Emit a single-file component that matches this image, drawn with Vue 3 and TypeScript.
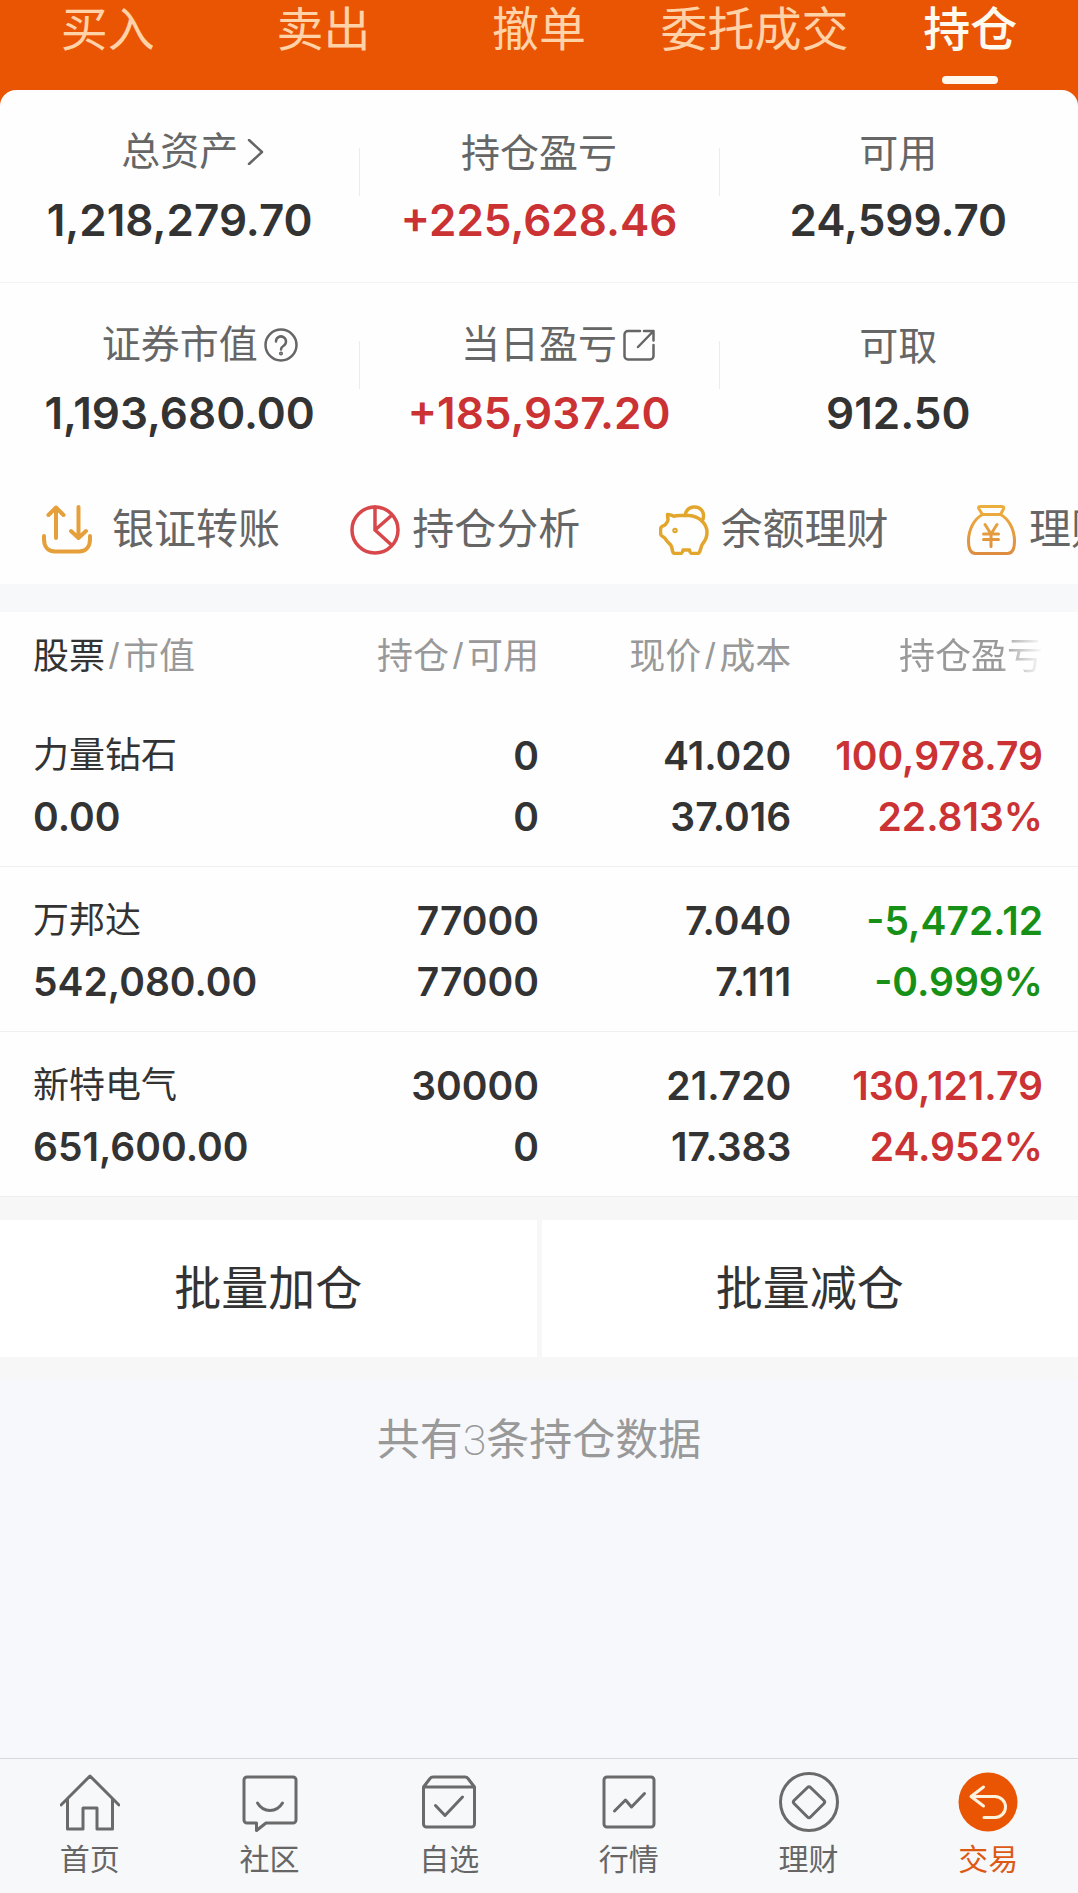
<script setup lang="ts">
import { ref } from 'vue'

interface Holding {
  name: string
  marketValue: string
  held: string
  available: string
  price: string
  cost: string
  profit: string
  rate: string
  trend: 'up' | 'down'
}

const topTabs: string[] = ['买入', '卖出', '撤单', '委托成交', '持仓']
const activeTop = ref('持仓')

const holdings: Holding[] = [
  { name: '力量钻石', marketValue: '0.00', held: '0', available: '0', price: '41.020', cost: '37.016', profit: '100,978.79', rate: '22.813%', trend: 'up' },
  { name: '万邦达', marketValue: '542,080.00', held: '77000', available: '77000', price: '7.040', cost: '7.111', profit: '-5,472.12', rate: '-0.999%', trend: 'down' },
  { name: '新特电气', marketValue: '651,600.00', held: '30000', available: '0', price: '21.720', cost: '17.383', profit: '130,121.79', rate: '24.952%', trend: 'up' },
]
</script>

<template>
  <div class="app">
    <nav class="top-tabs">
      <button
        v-for="tab in topTabs"
        :key="tab"
        type="button"
        class="top-tab"
        :class="{ active: tab === activeTop }"
        @click="activeTop = tab"
      >
        {{ tab }}
      </button>
    </nav>

    <main class="content">
      <div class="card-wrap">
        <section class="card">
          <dl class="summary">
            <div class="cell">
              <dt class="label raised">
                <span class="label-text">总资产</span>
                <svg class="label-icon" width="20" height="26" viewBox="0 0 20 26"><path d="M5 1l13 12L5 25" /></svg>
              </dt>
              <dd class="value">1,218,279.70</dd>
            </div>
            <div class="cell">
              <dt class="label"><span class="label-text">持仓盈亏</span></dt>
              <dd class="value up">+225,628.46</dd>
            </div>
            <div class="cell">
              <dt class="label"><span class="label-text">可用</span></dt>
              <dd class="value">24,599.70</dd>
            </div>
          </dl>
          <dl class="summary">
            <div class="cell">
              <dt class="label raised">
                <span class="label-text">证券市值</span>
                <svg class="label-icon" width="34" height="34" viewBox="0 0 34 34">
                  <circle cx="17" cy="17" r="15.5" />
                  <path d="M12 13.5a5 5 0 1 1 7.6 4.2c-1.8 1.1-2.6 1.9-2.6 3.8" />
                  <circle cx="17" cy="25.5" r="0.8" />
                </svg>
              </dt>
              <dd class="value">1,193,680.00</dd>
            </div>
            <div class="cell">
              <dt class="label raised">
                <span class="label-text">当日盈亏</span>
                <svg class="label-icon" width="32" height="32" viewBox="0 0 32 32">
                  <path d="M17 2H5a3.5 3.5 0 0 0-3.500 3.500V27A3.500 3.500 0 0 0 5 30.500h22a3.500 3.500 0 0 0 3.500-3.500V16M21 2h9.500v9.500M30.500 2L15 18" />
                </svg>
              </dt>
              <dd class="value up">+185,937.20</dd>
            </div>
            <div class="cell">
              <dt class="label"><span class="label-text">可取</span></dt>
              <dd class="value">912.50</dd>
            </div>
          </dl>

          <nav class="shortcuts">
            <a href="#" class="shortcut wide-gap">
              <svg width="50" height="50" viewBox="0 0 50 50" stroke="#e5a03c" stroke-width="4">
                <path d="M14 33V2.500M6.500 10L14 2.500 21.500 10M36.500 2v31M29 26l7.500 7 7.500-7M2 31v3c0 8 4 12.500 11 12.500h24c7 0 11-4.500 11-12.500v-3" />
              </svg>
              <span>银证转账</span>
            </a>
            <a href="#" class="shortcut">
              <svg width="50" height="50" viewBox="0 0 50 50" stroke="#d8474a" stroke-width="3.500">
                <circle cx="25" cy="25" r="23" />
                <path d="M25 2V25L41.500 10.500M25 25l16.500 15" />
              </svg>
              <span>持仓分析</span>
            </a>
            <a href="#" class="shortcut">
              <svg width="50" height="50" viewBox="0 0 50 50" stroke="#e3a62c" stroke-width="3.500">
                <path d="M26 10.500C27 5 30.500 2 35.500 2c6 0 9.500 4.500 9 9.500 0 1.500-.5 3-1.500 4.500" />
                <path d="M8.500 9.500c2 .2 4.500.5 6.500 1.800C17 10 21 10.500 25 10.500h5c10 .5 18 8 18 17 0 5-1.500 8-4.500 11.500-1.500 2-1.500 5-3 8-.5 1-1 1.500-2 1.500H33c-1.500 0-2-.5-2.500-3.500H24c-.5 3-1 3.500-2.500 3.500H16c-1.500 0-2-.5-2.500-2.500-.3-2-.5-4-1.500-5.500-1.500-2-4-3.500-5.500-6.500C5.500 32 2.500 31.500 2 30c-.5-2-.5-6 0-7.500.5-1.500 3.500-1.500 4.500-3 .8-1.500 2.500-3 2.500-4.500z" />
                <circle cx="16" cy="25.500" r="1" />
              </svg>
              <span>余额理财</span>
            </a>
            <a href="#" class="shortcut">
              <svg width="50" height="50" viewBox="0 0 50 50" stroke="url(#bag)" stroke-width="3">
                <defs>
                  <linearGradient id="bag" gradientUnits="userSpaceOnUse" x1="0" y1="0" x2="0" y2="50">
                    <stop offset="0" stop-color="#ecb03c" />
                    <stop offset="1" stop-color="#de8c40" />
                  </linearGradient>
                </defs>
                <path d="M13 1.500h22c2 0 2 1 1.500 2.500l-3 5.500h-18L12 4c-.8-1.500-.6-2.500 1-2.500z" />
                <path d="M15.500 9.500C7 14 1.500 25 1.500 36c0 7 1 12.500 7 12.500h32c6 0 7-5.500 7-12.500 0-11-5.500-22-14-26.500" />
                <path d="M18 19.500l6 9.500 6-9.500M24 29v12.500M16.500 29h15M16.500 34.500h15" />
              </svg>
              <span>理财</span>
            </a>
          </nav>
        </section>
      </div>

      <section class="positions">
        <table class="holdings">
          <colgroup>
            <col class="col-name" />
            <col class="col-held" />
            <col class="col-price" />
            <col class="col-profit" />
          </colgroup>
          <thead>
            <tr>
              <th scope="col"><span class="strong">股票</span><span class="slash">/</span>市值</th>
              <th scope="col">持仓<span class="slash">/</span>可用</th>
              <th scope="col">现价<span class="slash">/</span>成本</th>
              <th scope="col"><span class="fade">持仓盈亏</span></th>
            </tr>
          </thead>
          <tbody>
            <tr v-for="h in holdings" :key="h.name">
              <td><span class="line name">{{ h.name }}</span><span class="line">{{ h.marketValue }}</span></td>
              <td><span class="line">{{ h.held }}</span><span class="line">{{ h.available }}</span></td>
              <td><span class="line">{{ h.price }}</span><span class="line">{{ h.cost }}</span></td>
              <td :class="h.trend"><span class="line">{{ h.profit }}</span><span class="line">{{ h.rate }}</span></td>
            </tr>
          </tbody>
        </table>
      </section>

      <div class="batch">
        <button type="button" class="batch-btn">批量加仓</button>
        <button type="button" class="batch-btn">批量减仓</button>
      </div>

      <p class="total">共有<span class="count">3</span>条持仓数据</p>
    </main>

    <nav class="tab-bar">
      <a href="#" class="tab">
        <svg width="60" height="60" viewBox="0 0 60 60">
          <path d="M1 33L30 4l29 29M7.500 27v30h15.500V36h14v21h15.500V27" />
        </svg>
        <span>首页</span>
      </a>
      <a href="#" class="tab">
        <svg width="60" height="60" viewBox="0 0 60 60">
          <path d="M7 5h46a3 3 0 0 1 3 3v40a3 3 0 0 1-3 3H26l-9.500 7.500V51H7a3 3 0 0 1-3-3V8a3 3 0 0 1 3-3z" />
          <path d="M17.500 31c3 5 7.500 7.500 12.500 7.500S39.500 36 42.500 31" />
        </svg>
        <span>社区</span>
      </a>
      <a href="#" class="tab">
        <svg width="60" height="60" viewBox="0 0 60 60">
          <path d="M4.500 15L11 6.500Q12 5 14 5h32q2 0 3 1.500L55.500 15v37a3 3 0 0 1-3 3h-45a3 3 0 0 1-3-3zM4.500 15h51M16.500 33.500l9.500 10L43.500 25" />
        </svg>
        <span>自选</span>
      </a>
      <a href="#" class="tab">
        <svg width="60" height="60" viewBox="0 0 60 60">
          <rect x="5" y="5" width="50" height="50" rx="3" />
          <path d="M15.500 39l11-11 6 7 13-13.500" />
        </svg>
        <span>行情</span>
      </a>
      <a href="#" class="tab">
        <svg width="60" height="60" viewBox="0 0 60 60">
          <circle cx="30" cy="30" r="28.500" />
          <path d="M28.500 15.500q1.500-1.500 3 0L45 28.500q1.500 1.500 0 3L31.500 45q-1.500 1.500-3 0L15 31.500q-1.500-1.500 0-3z" />
        </svg>
        <span>理财</span>
      </a>
      <a href="#" class="tab current">
        <svg width="60" height="60" viewBox="0 0 60 60">
          <circle class="disc" cx="30" cy="30" r="29.500" />
          <path class="arrow" d="M25.500 15L13 24.500l12.500 9.500M13 24.500h24a10.500 10.500 0 0 1 0 21H26" />
        </svg>
        <span>交易</span>
      </a>
    </nav>
  </div>
</template>

<style>
body {
  margin: 0;
  background: #f6f8fb;
}
</style>

<style scoped>
.app {
  display: flex;
  flex-direction: column;
  min-height: 100vh;
  background: #f6f8fb;
  color: #333;
  font-family: "Liberation Sans", "Noto Sans CJK SC", sans-serif;
}

button {
  border: 0;
  padding: 0;
  background: none;
  font-family: inherit;
  cursor: pointer;
}

a {
  color: inherit;
  text-decoration: none;
}

svg {
  display: block;
  flex: none;
  fill: none;
  stroke-linecap: round;
  stroke-linejoin: round;
}

.top-tabs {
  display: flex;
  background: #ea5504;
}

.top-tab {
  position: relative;
  flex: 1;
  height: 90px;
  padding-bottom: 30px;
  font-size: 47px;
  line-height: 60px;
  color: #ffd2a8;
  white-space: nowrap;
}

.top-tab.active {
  color: #fffaf0;
  font-weight: 500;
}

.top-tab.active::after {
  content: "";
  position: absolute;
  left: 50%;
  bottom: 6px;
  width: 56px;
  height: 8px;
  margin-left: -28px;
  border-radius: 4px;
  background: #fffaf0;
}

.content {
  flex: 1;
}

.card-wrap {
  background: #ea5504;
}

.card {
  border-radius: 16px 16px 0 0;
  background: #fefefe;
  overflow: hidden;
}

.summary {
  display: flex;
  margin: 0;
  padding: 36px 0 34px;
}

.summary + .summary {
  border-top: 1px solid #f2f2f2;
}

.cell {
  position: relative;
  flex: 1;
  text-align: center;
}

.cell + .cell::before {
  content: "";
  position: absolute;
  left: 0;
  top: 22px;
  width: 1px;
  height: 48px;
  background: #ececec;
}

.label {
  display: grid;
  grid-template-columns: 1fr auto 1fr;
  align-items: center;
  column-gap: 6px;
  box-sizing: border-box;
  height: 56px;
  font-size: 39px;
  line-height: 50px;
  color: #666;
}

.label.raised {
  padding-bottom: 5px;
}

.label-text {
  grid-column: 2;
}

.label-icon {
  stroke: #666;
  stroke-width: 2.5;
}

.value {
  margin: 0;
  padding-top: 10px;
  font-family: Inter, sans-serif;
  font-size: 44px;
  font-weight: 600;
  line-height: 56px;
}

.up {
  color: #cb3234;
}

.down {
  color: #169016;
}

.shortcuts {
  display: flex;
  padding: 25px 0 24px;
  overflow: hidden;
}

.shortcut {
  display: flex;
  flex: 0 0 28.6%;
  align-items: center;
  gap: 12px;
  box-sizing: border-box;
  height: 60px;
  padding-left: 42px;
  font-size: 42px;
  line-height: 60px;
  color: #666;
  white-space: nowrap;
}

.shortcut.wide-gap {
  gap: 20px;
}

.positions {
  border-top: 28px solid #f6f8fa;
  background: #fefefe;
}

.holdings {
  width: 100%;
  border-collapse: collapse;
  table-layout: fixed;
}

.col-name,
.col-held {
  width: 25%;
}

.col-price {
  width: 23.4%;
}

th {
  height: 90px;
  padding: 0;
  font-size: 36px;
  font-weight: 400;
  line-height: 50px;
  text-align: right;
  color: #999;
  white-space: nowrap;
}

th:first-child,
td:first-child {
  padding-left: 33px;
  text-align: left;
}

th:last-child,
td:last-child {
  padding-right: 35px;
}

.strong {
  color: #333;
}

.slash {
  padding: 0 4px;
}

.fade {
  -webkit-mask-image: linear-gradient(to right, #000 70%, transparent 100%);
  mask-image: linear-gradient(to right, #000 70%, transparent 100%);
}

td {
  padding: 23px 0 19px;
  border-bottom: 1px solid #efefef;
  font-family: Inter, sans-serif;
  font-size: 39px;
  font-weight: 600;
  text-align: right;
}

.line {
  display: block;
  height: 61px;
  line-height: 61px;
  white-space: nowrap;
}

.name {
  font-family: "Liberation Sans", "Noto Sans CJK SC", sans-serif;
  font-size: 36px;
  font-weight: 400;
}

.batch {
  display: flex;
  gap: 5px;
  padding: 23px 0;
  background: #f7f7f7;
}

.batch-btn {
  flex: 1;
  height: 137px;
  background: #fff;
  font-size: 47px;
  line-height: 60px;
  color: #333;
}

.total {
  margin: 0;
  padding: 30px 0;
  font-size: 43px;
  line-height: 60px;
  text-align: center;
  color: #999;
}

.count {
  font-family: Roboto, sans-serif;
  font-weight: 200;
}

.tab-bar {
  display: flex;
  border-top: 1px solid #d6d8db;
  background: #f7f8fa;
}

.tab {
  display: flex;
  flex: 1;
  flex-direction: column;
  align-items: center;
  gap: 6px;
  padding: 13px 0 12px;
  font-size: 30px;
  line-height: 43px;
  color: #666;
}

.tab svg {
  stroke: #6a6a6a;
  stroke-width: 3;
}

.tab.current {
  color: #dd5a14;
}

.tab .disc {
  fill: #ea5504;
  stroke: none;
}

.tab .arrow {
  stroke: #fff2dc;
  stroke-width: 3;
}
</style>
